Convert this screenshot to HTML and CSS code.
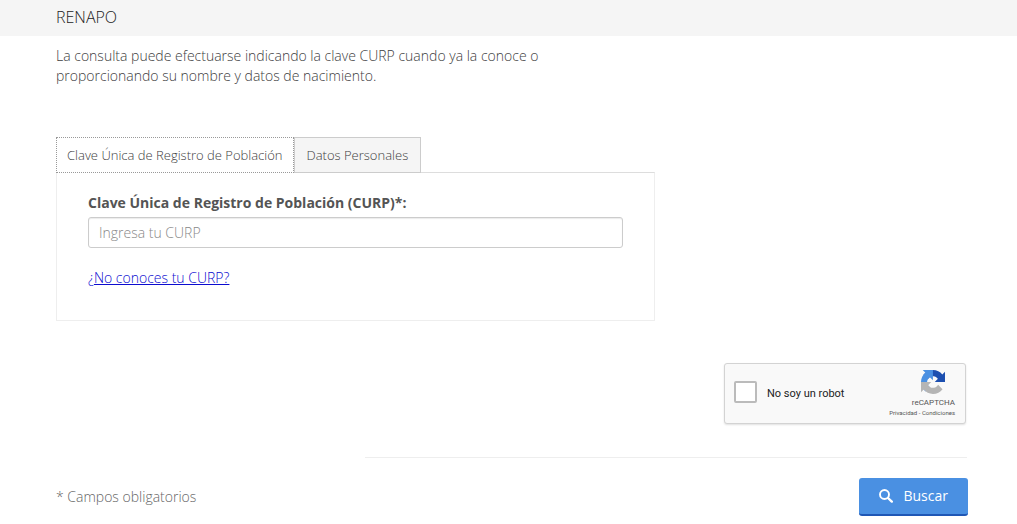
FILE: index.html
```html
<!DOCTYPE html>
<html lang="es">
<head>
<meta charset="utf-8">
<meta name="viewport" content="width=device-width, initial-scale=1">
<title>RENAPO</title>
<link rel="stylesheet" href="styles.css">
</head>
<body>
<header class="subnav"><a class="subnav-brand" href="#">RENAPO</a></header>
<main class="container">
  <p class="intro">La consulta puede efectuarse indicando la clave CURP cuando ya la conoce o proporcionando su nombre y datos de nacimiento.</p>
  <form class="search">
    <section class="lookup">
      <div class="tabs" role="tablist">
        <button class="tab tab-active" type="button" role="tab" aria-selected="true">Clave Única de Registro de Población</button>
        <button class="tab" type="button" role="tab" aria-selected="false">Datos Personales</button>
      </div>
      <div class="panel" role="tabpanel">
        <label class="field-label" for="curp">Clave Única de Registro de Población (CURP)*:</label>
        <input class="field" id="curp" type="text" placeholder="Ingresa tu CURP">
        <p class="help"><span class="help-mark">¿</span><a class="help-link" href="#">No conoces tu CURP?</a></p>
      </div>
    </section>
    <div class="captcha">
      <input class="captcha-box" id="robot" type="checkbox">
      <label class="captcha-label" for="robot">No soy un robot</label>
      <div class="captcha-brand">
        <svg class="captcha-logo" viewBox="0 0 64 64" aria-hidden="true">
          <path fill="#1c4fb0" d="M64 31.955l-.033-1.370V4.687l-7.160 7.160C50.948 4.674 42.033.093 32.050.093c-10.400 0-19.622 4.960-25.458 12.640l11.736 11.860a15.550 15.550 0 0 1 4.754-5.334c2.050-1.600 4.952-2.906 8.968-2.906.485 0 .860.057 1.135.163 4.976.393 9.288 3.140 11.828 7.124l-8.307 8.307L64 31.953"/>
          <path fill="#4a90e2" d="M31.862.094l-1.370.033H4.594l7.160 7.160C4.580 13.147 0 22.060 0 32.046c0 10.400 4.960 19.622 12.640 25.458L24.500 45.768a15.550 15.550 0 0 1-5.334-4.754c-1.600-2.050-2.906-4.952-2.906-8.968 0-.485.057-.860.163-1.135.393-4.976 3.140-9.288 7.124-11.828l8.307 8.307L31.860.095"/>
          <path fill="#b5b5b5" d="M.001 32.045l.033 1.370v25.898l7.160-7.160c5.860 7.173 14.774 11.754 24.760 11.754 10.400 0 19.622-4.960 25.458-12.640l-11.736-11.860a15.550 15.550 0 0 1-4.754 5.334c-2.050 1.600-4.952 2.906-8.968 2.906-.485 0-.860-.057-1.135-.163-4.976-.393-9.288-3.140-11.828-7.124l8.307-8.307c-10.522.040-22.400.066-27.295-.005"/>
        </svg>
        <span class="captcha-name">reCAPTCHA</span>
        <span class="captcha-links"><a href="#">Privacidad</a> - <a href="#">Condiciones</a></span>
      </div>
    </div>
    <hr class="rule">
    <div class="footer">
      <span class="required">* Campos obligatorios</span>
      <button class="submit" type="submit">
        <svg class="submit-icon" viewBox="0 0 14 14" aria-hidden="true">
          <circle cx="5.500" cy="5.500" r="4.500" fill="none" stroke="#fff" stroke-width="1.900"/>
          <path d="M9 9l3.800 3.600" stroke="#fff" stroke-width="2.400" stroke-linecap="round"/>
        </svg>
        Buscar
      </button>
    </div>
  </form>
</main>
</body>
</html>
```
FILE: styles.css
```css
* { box-sizing: border-box; }
body {
  margin: 0;
  background: #fff;
  color: #404041;
  font: 300 14px/20px "Open Sans", sans-serif;
}
button, input { font: inherit; color: inherit; }
.subnav {
  padding: 7px 56px 9px;
  background: #f5f5f5;
}
.subnav-brand {
  display: block;
  color: #222;
  font-size: 16px;
  text-decoration: none;
}
.container { padding: 10px 49px 8px 56px; }
.intro { max-width: 520px; margin: 0 0 51px; }
.search { display: flex; flex-direction: column; }
.lookup { width: 100%; max-width: 599px; }
.tabs { display: flex; position: relative; z-index: 1; }
.tab {
  height: 36px;
  padding: 0 12px;
  border: 1px solid #ccc;
  background: #f5f5f5;
  font-size: 13px;
  white-space: nowrap;
}
.tab-active { padding: 0 10px; border: 1px dotted #999; background: #fff; }
.panel {
  margin-top: -1px;
  padding: 20px 31px 32px;
  border: 1px solid #eee;
  border-top-color: #ddd;
}
.field-label { display: block; margin-bottom: 4px; font-weight: 700; color: #545454; }
.field {
  display: block;
  width: 100%;
  height: 31px;
  padding: 0 10px;
  border: 1px solid #ccc;
  border-radius: 3px;
  background: #fff;
  box-shadow: inset 0 1px 1px rgba(0, 0, 0, .08);
}
.field::placeholder { color: #888; opacity: 1; }
.help { margin: 20px 0 0; }
.help-mark, .help-link { color: #0c0cd0; }
.captcha {
  display: flex;
  align-items: center;
  align-self: flex-end;
  width: 242px;
  height: 61px;
  margin: 42px 2px 0 0;
  padding: 0 10px 0 9px;
  border: 1px solid #d3d3d3;
  border-radius: 3px;
  background: #f9f9f9;
  box-shadow: 0 1px 2px rgba(0, 0, 0, .12);
  font-family: Roboto, sans-serif;
  font-weight: 400;
}
.captcha-box {
  appearance: none;
  width: 23px;
  height: 22px;
  margin: 0 10px 4px 0;
  border: 2px solid #bbb;
  border-radius: 2px;
  background: #fff;
}
.captcha-label { flex: 1; color: #222; font-size: 11px; }
.captcha-brand { display: flex; flex-direction: column; align-items: flex-end; color: #555; }
.captcha-logo { width: 24px; height: 24px; margin: 0 10px 4px 0; }
.captcha-name { font-size: 8px; line-height: 10px; }
.captcha-links { font-size: 6px; line-height: 10px; }
.captcha-links a { color: inherit; text-decoration: none; }
.rule {
  align-self: flex-end;
  width: 66%;
  margin: 33px 1px 20px 0;
  border: 0;
  border-top: 1px solid #eee;
}
.footer { display: flex; align-items: center; justify-content: space-between; }
.required { color: #666; }
.submit {
  display: flex;
  align-items: center;
  gap: 10px;
  height: 38px;
  padding: 0 20px;
  border: 0;
  border-bottom: 2px solid #1f57b5;
  border-radius: 3px;
  background: #4a90e2;
  color: #fff;
  font-weight: 400;
}
.submit-icon { width: 14px; height: 14px; }
```
